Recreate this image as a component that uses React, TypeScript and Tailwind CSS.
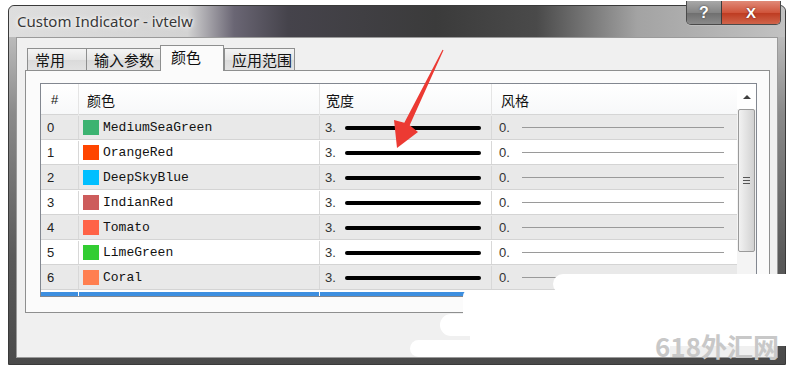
import React from 'react';

const rows = [
  { n: 0, name: 'MediumSeaGreen', color: '#3CB371' },
  { n: 1, name: 'OrangeRed', color: '#FF4500' },
  { n: 2, name: 'DeepSkyBlue', color: '#00BFFF' },
  { n: 3, name: 'IndianRed', color: '#CD5C5C' },
  { n: 4, name: 'Tomato', color: '#FF6347' },
  { n: 5, name: 'LimeGreen', color: '#32CD32' },
  { n: 6, name: 'Coral', color: '#FF7F50' },
];

const tabs = [
  { label: '常用', w: 'w-[60px]' },
  { label: '输入参数', w: 'w-[75px]' },
  { label: '颜色', w: 'w-[64px]', active: true },
  { label: '应用范围', w: 'w-[71px]' },
];

function TitleButtons() {
  return (
    <div className="absolute left-[677px] top-[-5px] flex h-[24px] rounded-b-[5px] border border-t-0 border-[#4a4a4a] overflow-hidden shadow-[0_1px_0_#bdbdbd]">
      <div className="w-[35px] flex items-center justify-center bg-[linear-gradient(#a8a8a8,#858585_50%,#6e6e6e_51%,#8a8a8a)] border-r border-[#3c3c3c] text-white font-bold text-[16px] leading-none font-['Liberation_Sans',sans-serif] [text-shadow:0_0_2px_#333]">
        ?
      </div>
      <div className="w-[58px] flex items-center justify-center bg-[linear-gradient(#e08a78,#d0553c_50%,#bd3a20_51%,#d0644a)] text-white font-bold text-[15px] leading-none font-['Liberation_Sans',sans-serif] [text-shadow:0_0_2px_#5a1a10]">
        X
      </div>
    </div>
  );
}

function Overlay() {
  return (
    <>
      <svg className="absolute left-[385px] top-[45px]" width="70" height="110" viewBox="0 0 70 110">
        <polygon points="58.5,5.2 24.7,80.3 33,87 12,103 9,75 19.3,77.7 57.5,4.8" fill="#ec3a33" />
      </svg>
      <div className="absolute left-[553px] top-[274px] w-[235px] h-[20px] rounded-l-full bg-white" />
      <div className="absolute left-[463px] top-[290px] w-[325px] h-[30px] rounded-l-[6px] bg-white" />
      <div className="absolute left-[440px] top-[314px] w-[348px] h-[22px] rounded-l-full bg-white" />
      <div className="absolute left-[470px] top-[330px] w-[318px] h-[16px] bg-white" />
      <div className="absolute left-[410px] top-[340px] w-[260px] h-[17px] rounded-l-full bg-white" />
      <div className="absolute left-[655px] top-[330px] text-[26px] leading-[32px] font-bold text-[#c8c8c8] font-['Noto_Sans_CJK_SC',sans-serif]">
        618外汇网
      </div>
    </>
  );
}

export default function App() {
  return (
    <div className="relative w-[788px] h-[372px] bg-white pt-[5px] pl-[8px] overflow-hidden font-['Noto_Sans','Noto_Sans_CJK_SC',sans-serif]">
      <div className="relative w-[778px] h-[360px] flex flex-col bg-[linear-gradient(#cfcfcf,#8a8a8a_30%,#5a5a5a_70%,#4a4a4a)] border border-[#3a3a3a] rounded-t-[6px]">
        {/* title bar */}
        <div className="h-[31px] flex items-center pl-[8px] bg-[linear-gradient(90deg,#dedede_0%,#d3d3d3_23%,#6a6674_29%,#45434b_36%,#3b3b3b_55%,#4a4a4a_68%,#a3a3a3_81%,#c2c2c2_100%)] rounded-t-[6px]">
          <span className="text-[15px] text-[#383838] [text-shadow:0_0_6px_#ffffff,0_0_3px_#ffffff]">
            Custom Indicator - ivtelw
          </span>
        </div>
        <TitleButtons />

        {/* client area */}
        <div className="flex-1 flex mx-[7px] mb-[6px]">
          <div className="flex-1 flex flex-col bg-[#f0f0f0] border border-[#9a9a9a] pl-[8px] pr-[7px] pt-[7px]">
            {/* tabs */}
            <div className="flex items-end h-[25px] pl-[2px]">
              {tabs.map((t) =>
                t.active ? (
                  <div
                    key={t.label}
                    className={`${t.w} h-[26px] -mb-px relative z-10 bg-[#fbfbfb] border border-b-0 border-[#8e8f8f] pl-[10px] pt-[1px] text-[15px] leading-[20px] text-[#111] font-['Noto_Sans_CJK_SC',sans-serif]`}
                  >
                    {t.label}
                  </div>
                ) : (
                  <div
                    key={t.label}
                    className={`${t.w} h-[22px] bg-[linear-gradient(#f4f4f4,#e6e6e6_50%,#dadada_51%,#e2e2e2)] border border-b-0 border-[#8e8f8f] -mr-px pl-[7px] text-[15px] leading-[21px] text-[#111] font-['Noto_Sans_CJK_SC',sans-serif]`}
                  >
                    {t.label}
                  </div>
                )
              )}
            </div>

            {/* tab panel */}
            <div className="h-[243px] bg-[#fbfbfb] border border-[#8e8f8f] pt-[12px] pl-[14px] pr-[12px]">
              <div className="h-[214px] flex border border-[#828790] bg-white overflow-hidden">
                <div className="w-[696px] flex flex-col">
                  {/* header */}
                  <div className="grid grid-cols-[38px_241px_172px_245px] h-[31px] bg-[linear-gradient(#ffffff,#f7f8f9)] border-b border-[#d5d5d5] text-[14px] text-[#111] font-['Noto_Sans_CJK_SC',sans-serif]">
                    <div className="border-r border-[#e5e5e5] pl-[10px] leading-[32px] font-['Liberation_Sans',sans-serif] text-[13px]">#</div>
                    <div className="border-r border-[#e5e5e5] pl-[8px] leading-[32px]">颜色</div>
                    <div className="border-r border-[#e5e5e5] pl-[6px] leading-[32px]">宽度</div>
                    <div className="pl-[9px] leading-[32px]">风格</div>
                  </div>
                  {rows.map((r, i) => (
                    <div
                      key={r.n}
                      className={`grid grid-cols-[38px_241px_172px_245px] h-[25px] pt-[1px] border-b border-[#d4d4d4] ${i % 2 === 0 ? 'bg-[#e9e9e9]' : 'bg-white'}`}
                    >
                      <div className="border-r border-[#d8d8d8] pl-[6px] flex items-center text-[13px] text-[#222] font-['Liberation_Sans',sans-serif]">
                        {r.n}
                      </div>
                      <div className="border-r border-[#d8d8d8] pl-[4px] flex items-center gap-[4px]">
                        <div className="w-[16px] h-[15px]" style={{ backgroundColor: r.color }} />
                        <span className="text-[13px] text-[#111] font-['Liberation_Mono',monospace]">{r.name}</span>
                      </div>
                      <div className="border-r border-[#d8d8d8] pl-[5px] pr-[10px] flex items-center text-[13px] text-[#333] font-['Liberation_Sans',sans-serif]">
                        <span>3.</span>
                        <div className="flex-1 ml-[9px] h-[4px] rounded-full bg-black" />
                      </div>
                      <div className="pl-[7px] pr-[13px] flex items-center text-[13px] text-[#333] font-['Liberation_Sans',sans-serif]">
                        <span>0.</span>
                        <div className="flex-1 ml-[12px] h-px bg-[#9a9a9a]" />
                      </div>
                    </div>
                  ))}
                  <div className="grid grid-cols-[38px_241px_172px_245px] h-[6px] pt-[2px]">
                    <div className="bg-[#3d8fe0] border-r border-white" />
                    <div className="bg-[#3d8fe0] border-r border-white" />
                    <div className="bg-[#3d8fe0] border-r border-white" />
                    <div className="bg-[#3d8fe0]" />
                  </div>
                </div>

                {/* scrollbar */}
                <div className="w-[19px] flex flex-col bg-[#f4f4f4]">
                  <div className="h-[25px] flex items-center justify-center bg-white">
                    <div className="w-0 h-0 border-l-[4px] border-r-[4px] border-b-[4px] border-l-transparent border-r-transparent border-b-[#404040]" />
                  </div>
                  <div className="h-[143px] mx-[1px] rounded-[2px] border border-[#9a9a9a] bg-[linear-gradient(90deg,#f2f2f2,#e2e2e2_50%,#d2d2d2)] flex flex-col items-center justify-center gap-[2px]">
                    <div className="w-[7px] h-px bg-[#555]" />
                    <div className="w-[7px] h-px bg-[#555]" />
                    <div className="w-[7px] h-px bg-[#555]" />
                  </div>
                </div>
              </div>
            </div>
          </div>
        </div>
      </div>
      <Overlay />
    </div>
  );
}
